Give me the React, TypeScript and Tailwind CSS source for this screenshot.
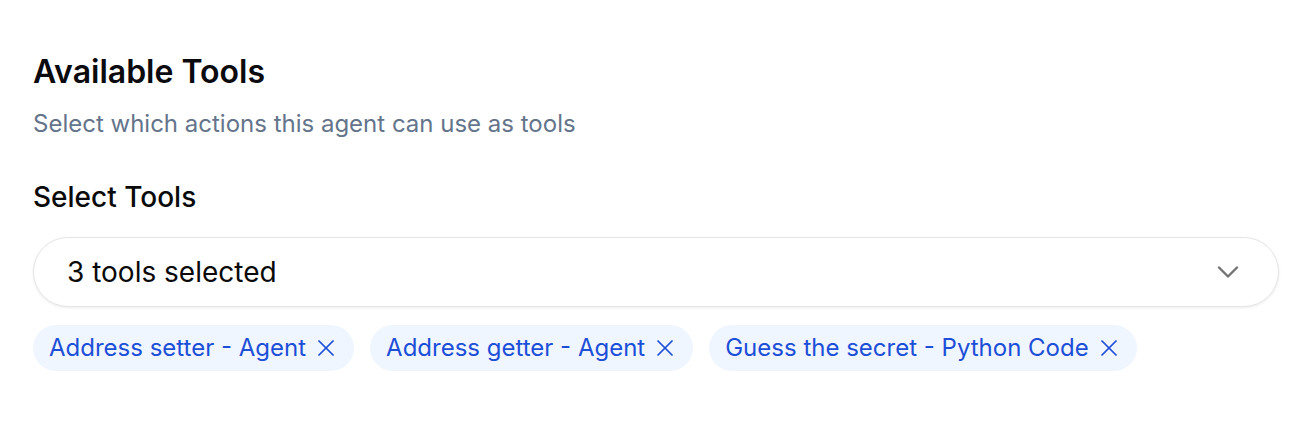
import { ChevronDown, X } from 'lucide-react';

const tools = ['Address setter - Agent', 'Address getter - Agent', 'Guess the secret - Python Code'];

export default function App() {
  return (
    <div className="min-h-[430px] bg-white px-[33px] pt-[52px] font-['Inter',sans-serif]">
      <h2 className="text-[32px] font-semibold leading-[40px] text-[#0a0a0f]">Available Tools</h2>
      <p className="mt-[16px] text-[24px] leading-[32px] text-[#64748b]">Select which actions this agent can use as tools</p>

      <div className="mt-[39px] text-[28px] font-medium leading-[36px] text-[#0a0a0a]">Select Tools</div>

      <button
        type="button"
        className="mt-[22px] flex h-[70px] w-full items-center justify-between rounded-full border border-[#e5e5e5] bg-white pl-[33px] pr-[32px] shadow-[0_1px_3px_rgba(0,0,0,0.08)]"
      >
        <span className="text-[28px] text-[#0a0a0a]">3 tools selected</span>
        <ChevronDown className="h-9 w-9 text-[#737373]" strokeWidth={1.6} />
      </button>

      <div className="mt-[18px] flex flex-wrap gap-4">
        {tools.map((tool) => (
          <span
            key={tool}
            className="flex h-[46px] items-center gap-[6px] rounded-full bg-[#eff6ff] pl-4 pr-[14px] text-[24px] text-[#1d4ed8]"
          >
            {tool}
            <X className="h-7 w-7" strokeWidth={1.5} />
          </span>
        ))}
      </div>
    </div>
  );
}
